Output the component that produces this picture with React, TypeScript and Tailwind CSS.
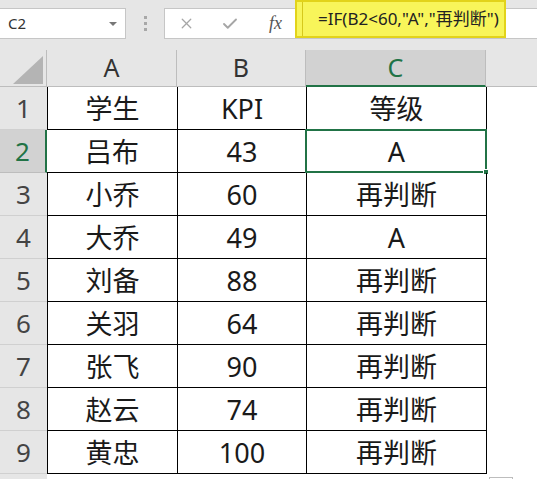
import { X, Check } from "lucide-react"

const rows = [
  { n: 1, a: "学生", b: "KPI", c: "等级" },
  { n: 2, a: "吕布", b: "43", c: "A" },
  { n: 3, a: "小乔", b: "60", c: "再判断" },
  { n: 4, a: "大乔", b: "49", c: "A" },
  { n: 5, a: "刘备", b: "88", c: "再判断" },
  { n: 6, a: "关羽", b: "64", c: "再判断" },
  { n: 7, a: "张飞", b: "90", c: "再判断" },
  { n: 8, a: "赵云", b: "74", c: "再判断" },
  { n: 9, a: "黄忠", b: "100", c: "再判断" },
]

const font = { fontFamily: '"Noto Sans", "Noto Sans CJK SC", sans-serif' }

export default function App() {
  return (
    <div className="w-[537px] h-[479px] overflow-hidden bg-white text-[#1a1a1a]" style={font}>
      {/* Formula bar */}
      <div className="h-[50px] bg-[#e6e6e6] flex items-start pt-2">
        <div className="w-[127px] h-[31px] -ml-px bg-white border border-[#c6c6c6] flex items-center justify-between pl-2 pr-2">
          <span className="text-[15px] text-[#333]">C2</span>
          <span className="w-0 h-0 border-l-[4px] border-r-[4px] border-t-[4px] border-l-transparent border-r-transparent border-t-[#777]" />
        </div>
        <div className="w-[38px] h-[31px] flex flex-col items-center justify-center gap-[3px]">
          <span className="w-[3px] h-[3px] bg-[#a8a8a8]" />
          <span className="w-[3px] h-[3px] bg-[#a8a8a8]" />
          <span className="w-[3px] h-[3px] bg-[#a8a8a8]" />
        </div>
        <div className="flex-1 h-[31px] bg-white border border-r-0 border-[#c6c6c6] flex items-center">
          <div className="w-[43px] flex justify-center">
            <X className="w-[17px] h-[17px] text-[#a6a6a6]" strokeWidth={1.8} />
          </div>
          <div className="w-[43px] flex justify-center">
            <Check className="w-[18px] h-[18px] text-[#a6a6a6]" strokeWidth={2.5} />
          </div>
          <div className="w-[43px] flex justify-center pl-[6px]">
            <span className="italic text-[18px] text-[#555]" style={{ fontFamily: '"Liberation Serif", serif' }}>
              fx
            </span>
          </div>
          <div className="-mt-[12px] -mb-[3px] ml-[1px] w-[211px] h-[38px] bg-[#f8f55a] border-2 border-[#e2d31a] flex items-center">
            <span className="w-px h-full bg-[#d6c81c] ml-[5px]" />
            <span className="ml-[15px] text-[17px] text-[#222] whitespace-nowrap">=IF(B2&lt;60,"A","再判断")</span>
          </div>
        </div>
      </div>

      {/* Column headers */}
      <div className="flex h-[37px] bg-[#e6e6e6] text-[25px] text-[#333]">
        <div className="w-[47px] border-r border-b border-[#bdbdbd] flex items-end justify-end pb-[2px] pr-[3px]">
          <svg width="30" height="28" viewBox="0 0 30 28">
            <polygon points="30,0 30,28 0,28" fill="#b4b4b4" />
          </svg>
        </div>
        <div className="w-[130px] border-r border-b border-[#bdbdbd] flex items-center justify-center">A</div>
        <div className="w-[129px] border-r border-b border-[#bdbdbd] flex items-center justify-center">B</div>
        <div className="w-[180px] bg-[#d2d2d2] border-r border-[#bdbdbd] border-b-2 border-b-[#217346] flex items-center justify-center text-[#217346]">
          C
        </div>
        <div className="flex-1 border-b border-[#bdbdbd]" />
      </div>

      {/* Rows */}
      {rows.map((r) => {
        const sel = r.n === 2
        return (
          <div key={r.n} className="flex h-[43px] text-[27px] leading-none">
            <div
              className={
                sel
                  ? "w-[47px] bg-[#d2d2d2] border-b border-[#bdbdbd] border-r-2 border-r-[#217346] flex items-center justify-center text-[26px] text-[#217346]"
                  : "w-[47px] bg-[#e6e6e6] border-b border-[#d0d0d0] flex items-center justify-center text-[26px] text-[#444]"
              }
            >
              {r.n}
            </div>
            <div className={"w-[131px] border-b border-r border-black flex items-center justify-center " + (sel ? "" : "border-l")}>
              {r.a}
            </div>
            <div className="w-[129px] border-b border-r border-black flex items-center justify-center">{r.b}</div>
            <div className="relative w-[180px] border-b border-r border-black flex items-center justify-center">
              {r.c}
              {sel && (
                <div className="absolute -left-[2px] -top-[1px] -right-[1px] -bottom-[1px] border-2 border-[#217346]">
                  <span className="absolute -right-[4px] -bottom-[4px] w-[6px] h-[6px] bg-[#217346] border border-white" />
                </div>
              )}
            </div>
            <div className="flex-1" />
          </div>
        )
      })}

      <div className="flex h-[10px]">
        <div className="w-[47px] bg-[#e6e6e6]" />
        <div className="w-[440px]" />
        <div className="mt-[3px] ml-[2px] w-[24px] h-[10px] border border-[#bdbdbd] bg-white" />
      </div>
    </div>
  )
}
